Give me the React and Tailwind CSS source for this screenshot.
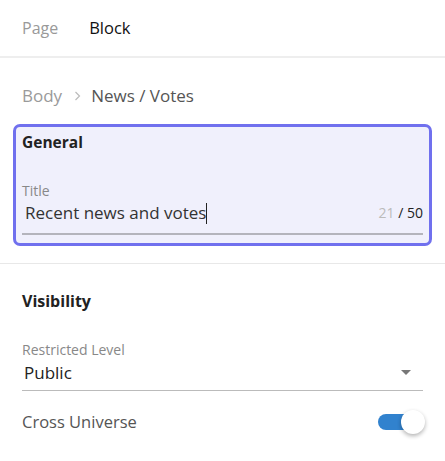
export default function App() {
  return (
    <div className="w-[445px] h-[461px] bg-white overflow-hidden text-[#222]" style={{ fontFamily: '"Open Sans", "Noto Sans", sans-serif' }}>
      <div className="flex items-center gap-[31px] h-[58px] px-[22px] border-b-2 border-[#eeeeee] text-[16px]">
        <span className="text-[#999999]">Page</span>
        <span className="text-[16.5px] text-[#111111]">Block</span>
      </div>

      <div className="flex items-center pt-[26px] pb-[16px] px-[22px] text-[17px] leading-[24px]">
        <span className="text-[#9a9a9a]">Body</span>
        <svg className="ml-[12px] mr-[9px]" width="8" height="12" viewBox="0 0 8 12">
          <path d="M1.5 2l4 4-4 4" fill="none" stroke="#bbbbbb" strokeWidth="1.2" />
        </svg>
        <span className="text-[#555555]">News / Votes</span>
      </div>

      <div className="mx-[13px] rounded-[7px] border-[3px] border-[#7070ee] bg-[#f0f0fc] px-[6px] pt-[4px] pb-[8px]">
        <div className="text-[15.5px] font-bold text-[#222] leading-[22px]">General</div>
        <div className="mt-[29px] text-[14px] text-[#888888] leading-[18px]">Title</div>
        <div className="flex items-center border-b-2 border-[#b4b4bc] pt-[1px] pb-[8px]">
          <span className="pl-[3px] text-[17px] text-[#333333] leading-[24px]">
            Recent news and votes
            <span className="inline-block w-[1px] h-[21px] bg-[#222] align-[-5px]" />
          </span>
          <span className="ml-auto text-[14px] leading-[20px]">
            <span className="text-[#bbbbbb]">21</span>
            <span className="text-[#222]"> / 50</span>
          </span>
        </div>
      </div>

      <div className="mt-[17px] border-t border-[#e8e8e8]" />

      <div className="px-[22px] pt-[25px]">
        <div className="text-[16px] font-bold text-[#222] leading-[24px]">Visibility</div>
        <div className="mt-[28px] text-[14px] text-[#888888] leading-[18px]">Restricted Level</div>
        <div className="flex items-center border-b border-[#bbbbbb] pt-[2px] pb-[5px]">
          <span className="pl-[2px] text-[17px] text-[#222] leading-[24px]">Public</span>
          <svg className="ml-auto mr-[12px]" width="10" height="6" viewBox="0 0 10 6">
            <path d="M0 0h10L5 5z" fill="#777777" />
          </svg>
        </div>
        <div className="flex items-center justify-between mt-[19px]">
          <span className="text-[16.5px] text-[#555555] leading-[24px]">Cross Universe</span>
          <div className="relative w-[36px] h-[16px] mr-[9px] rounded-full bg-[#3182ce]">
            <div className="absolute right-[-11px] top-[-4px] w-[24px] h-[24px] rounded-full bg-white shadow-[0_2px_4px_rgba(0,0,0,0.3)]" />
          </div>
        </div>
      </div>
    </div>
  );
}
